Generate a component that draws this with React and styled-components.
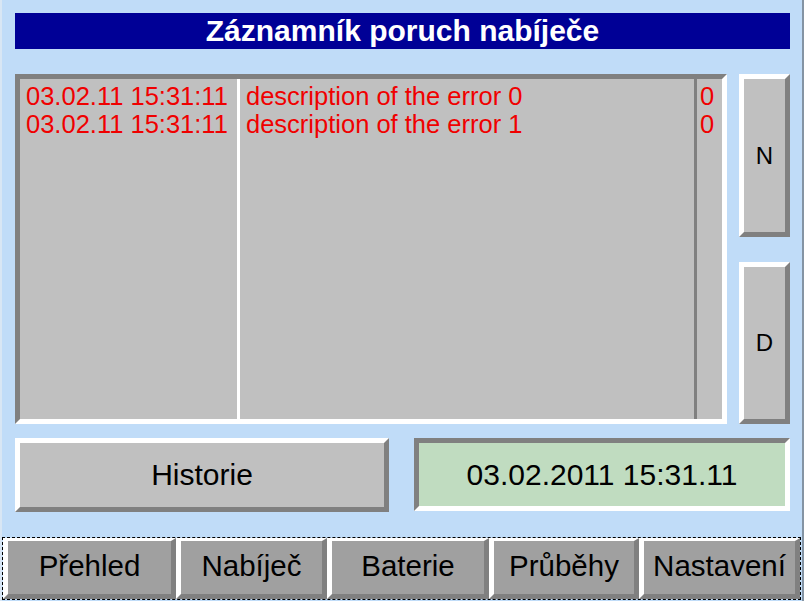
import React from 'react';
import styled, { createGlobalStyle } from 'styled-components';

const GlobalStyle = createGlobalStyle`
  * { box-sizing: border-box; }
  html, body { margin: 0; padding: 0; }
  body {
    font-family: "Liberation Sans", Arial, sans-serif;
    background: #c0dcf8;
  }
`;

const Screen = styled.div`
  width: 804px;
  height: 601px;
  display: flex;
  flex-direction: column;
  background: #c0dcf8;
  border-left: 2px solid #d8e6f4;
  border-right: 2px solid #8494a4;
  overflow: hidden;
`;

const Content = styled.div`
  display: flex;
  flex-direction: column;
  padding: 13px 12px 0 13px;
`;

const TitleBar = styled.div`
  height: 36px;
  width: 775px;
  background: #000096;
  color: #ffffff;
  font-size: 30px;
  font-weight: bold;
  line-height: 36px;
  text-align: center;
`;

const MainRow = styled.div`
  display: flex;
  gap: 12px;
  height: 350px;
  margin-top: 25px;
`;

const ListBox = styled.div`
  width: 712px;
  display: flex;
  background: #c0c0c0;
  border: 5px solid;
  border-color: #808080 #ffffff #ffffff #808080;
`;

const Column = styled.div`
  width: ${(p) => (p.$width ? `${p.$width}px` : 'auto')};
  flex: ${(p) => (p.$width ? 'none' : '1')};
  padding: 3px 0 0 ${(p) => p.$pad}px;
  border-right: ${(p) => (p.$sep ? `3px solid ${p.$sep}` : 'none')};
  color: #f00000;
  font-size: 25.5px;
  line-height: 28px;
  white-space: nowrap;
  overflow: hidden;
`;

const SideButtons = styled.div`
  width: 51px;
  display: flex;
  flex-direction: column;
  gap: 25px;
`;

const Bevel = styled.div`
  display: flex;
  align-items: center;
  justify-content: center;
  border: 5px solid;
  border-color: ${(p) =>
    p.$sunken
      ? '#808080 #ffffff #ffffff #808080'
      : '#ffffff #808080 #808080 #ffffff'};
  background: ${(p) => p.$bg || '#c0c0c0'};
  color: #000000;
`;

const SideButton = styled(Bevel)`
  height: ${(p) => p.$h}px;
  font-size: 24px;
`;

const InfoRow = styled.div`
  display: flex;
  gap: 25px;
  margin-top: 14px;
`;

const WideButton = styled(Bevel)`
  width: ${(p) => p.$w}px;
  height: ${(p) => p.$h}px;
  font-size: 30px;
`;

const NavBar = styled.div`
  display: flex;
  margin: 25px 1px 1px 0;
  height: 63px;
  border: 1px dashed #000000;
`;

const NavButton = styled.div`
  width: ${(p) => p.$w}px;
  display: flex;
  align-items: center;
  justify-content: center;
  padding-bottom: 3px;
  background: #a0a0a0;
  border-style: solid;
  border-width: 3px 5px 5px 5px;
  border-color: #ffffff #808080 #808080 #ffffff;
  font-size: 29.5px;
  color: #000000;
`;

const errors = [
  { time: '03.02.11 15:31:11', text: 'description of the error 0', count: '0' },
  { time: '03.02.11 15:31:11', text: 'description of the error 1', count: '0' },
];

const tabs = [
  { label: 'Přehled', w: 173 },
  { label: 'Nabíječ', w: 151 },
  { label: 'Baterie', w: 162 },
  { label: 'Průběhy', w: 150 },
  { label: 'Nastavení', w: 161 },
];

export default function App() {
  return (
    <Screen>
      <GlobalStyle />
      <Content>
        <TitleBar>Záznamník poruch nabíječe</TitleBar>
        <MainRow>
          <ListBox>
            <Column $width={220} $pad={6} $sep="#ffffff">
              {errors.map((e, i) => (
                <div key={i}>{e.time}</div>
              ))}
            </Column>
            <Column $width={457} $pad={6} $sep="#808080">
              {errors.map((e, i) => (
                <div key={i}>{e.text}</div>
              ))}
            </Column>
            <Column $pad={3}>
              {errors.map((e, i) => (
                <div key={i}>{e.count}</div>
              ))}
            </Column>
          </ListBox>
          <SideButtons>
            <SideButton $h={163}>N</SideButton>
            <SideButton $h={162}>D</SideButton>
          </SideButtons>
        </MainRow>
        <InfoRow>
          <WideButton $w={374} $h={74}>Historie</WideButton>
          <WideButton $w={376} $h={73} $sunken $bg="#c0dcc0">
            03.02.2011 15:31.11
          </WideButton>
        </InfoRow>
      </Content>
      <NavBar>
        {tabs.map((t) => (
          <NavButton key={t.label} $w={t.w}>
            {t.label}
          </NavButton>
        ))}
      </NavBar>
    </Screen>
  );
}
